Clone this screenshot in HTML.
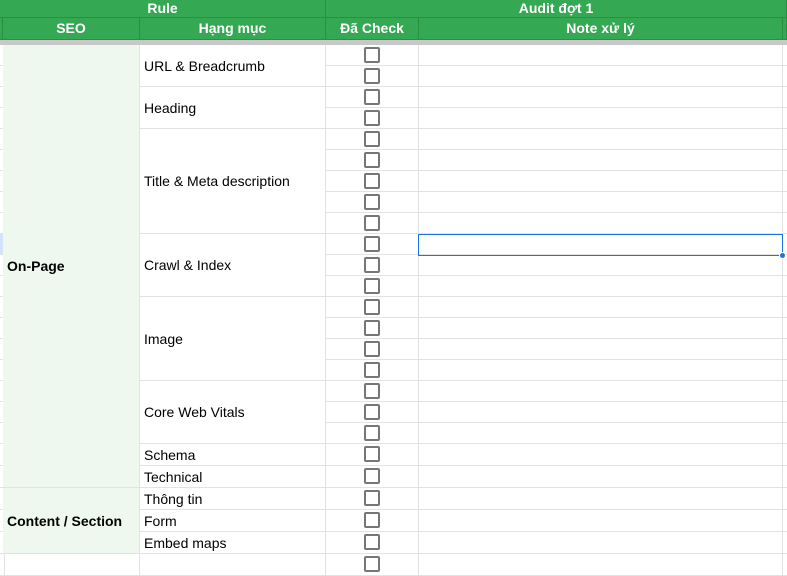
<!DOCTYPE html><html><head><meta charset="utf-8"><style>
body{margin:0;width:787px;height:557px;overflow:hidden;background:#fff;font-family:"Liberation Sans",Arial,sans-serif;position:relative}
div{position:absolute;box-sizing:border-box}
.h{background:#34a853;color:#fff;font-weight:bold;font-size:14px;text-align:center;border-right:1px solid #2a8f45;border-bottom:1px solid #2a8f45}
.c{border-right:1px solid #e2e2e2;border-bottom:1px solid #e2e2e2;font-size:14px;color:#000;display:flex;align-items:center;padding-left:4px}
.cb{width:16px;height:16px;border:2px solid #777;border-radius:2px;left:364px}
</style></head><body>
<div class="h" style="left:0;top:0;width:326px;height:18px;line-height:17px">Rule</div>
<div class="h" style="left:326px;top:0;width:461px;height:18px;line-height:17px">Audit đợt 1</div>
<div class="h" style="left:0;top:18px;width:3px;height:22px"></div>
<div class="h" style="left:3px;top:18px;width:137px;height:22px;line-height:21px">SEO</div>
<div class="h" style="left:140px;top:18px;width:186px;height:22px;line-height:21px">Hạng mục</div>
<div class="h" style="left:326px;top:18px;width:93px;height:22px;line-height:21px">Đã Check</div>
<div class="h" style="left:419px;top:18px;width:364px;height:22px;line-height:21px">Note xử lý</div>
<div class="h" style="left:783px;top:18px;width:4px;height:22px"></div>
<div style="left:0;top:40px;width:787px;height:5px;background:#c8c8c8"></div>
<div id="g"></div>
<script>
var o='';var Y=[45];
for(var i=0;i<26;i++){Y.push(Y[i]+(i<19?21:22));}
for(var i=0;i<25;i++){var y=Y[i],h=Y[i+1]-Y[i];
o+='<div class="c" style="left:0;top:'+y+'px;width:3px;height:'+h+'px;'+(i==9?'background:#d3e3fd':'')+'"></div>';
o+='<div class="c" style="left:326px;top:'+y+'px;width:93px;height:'+h+'px"></div>';
o+='<div class="c" style="left:419px;top:'+y+'px;width:364px;height:'+h+'px"></div>';
o+='<div class="c" style="left:783px;top:'+y+'px;width:4px;height:'+h+'px"></div>';
o+='<div class="cb" style="top:'+(y+2)+'px"></div>';}
var items=[["URL &amp; Breadcrumb",2],["Heading",2],["Title &amp; Meta description",5],["Crawl &amp; Index",3],["Image",4],["Core Web Vitals",3],["Schema",1],["Technical",1],["Thông tin",1],["Form",1],["Embed maps",1]];
var r=0;items.forEach(function(it){o+='<div class="c" style="left:140px;top:'+Y[r]+'px;width:186px;height:'+(Y[r+it[1]]-Y[r])+'px">'+it[0]+'</div>';r+=it[1];});
o+='<div class="c" style="left:140px;top:'+Y[r]+'px;width:186px;height:22px"></div>';
o+='<div class="c" style="left:3px;top:45px;width:137px;height:'+(Y[21]-45)+'px;background:#eff8ef;font-weight:bold">On-Page</div>';
o+='<div class="c" style="left:3px;top:'+Y[21]+'px;width:137px;height:'+(Y[24]-Y[21])+'px;background:#eff8ef;font-weight:bold">Content / Section</div>';
o+='<div class="c" style="left:3px;top:'+Y[24]+'px;width:137px;height:22px"></div>';
o+='<div style="left:418px;top:234px;width:365px;height:22px;border:1px solid #1a73e8"></div>';
o+='<div style="left:779px;top:252px;width:7px;height:7px;border-radius:50%;background:#1a73e8;border:1px solid #fff"></div>';
document.getElementById('g').innerHTML=o;
</script>
</body></html>
